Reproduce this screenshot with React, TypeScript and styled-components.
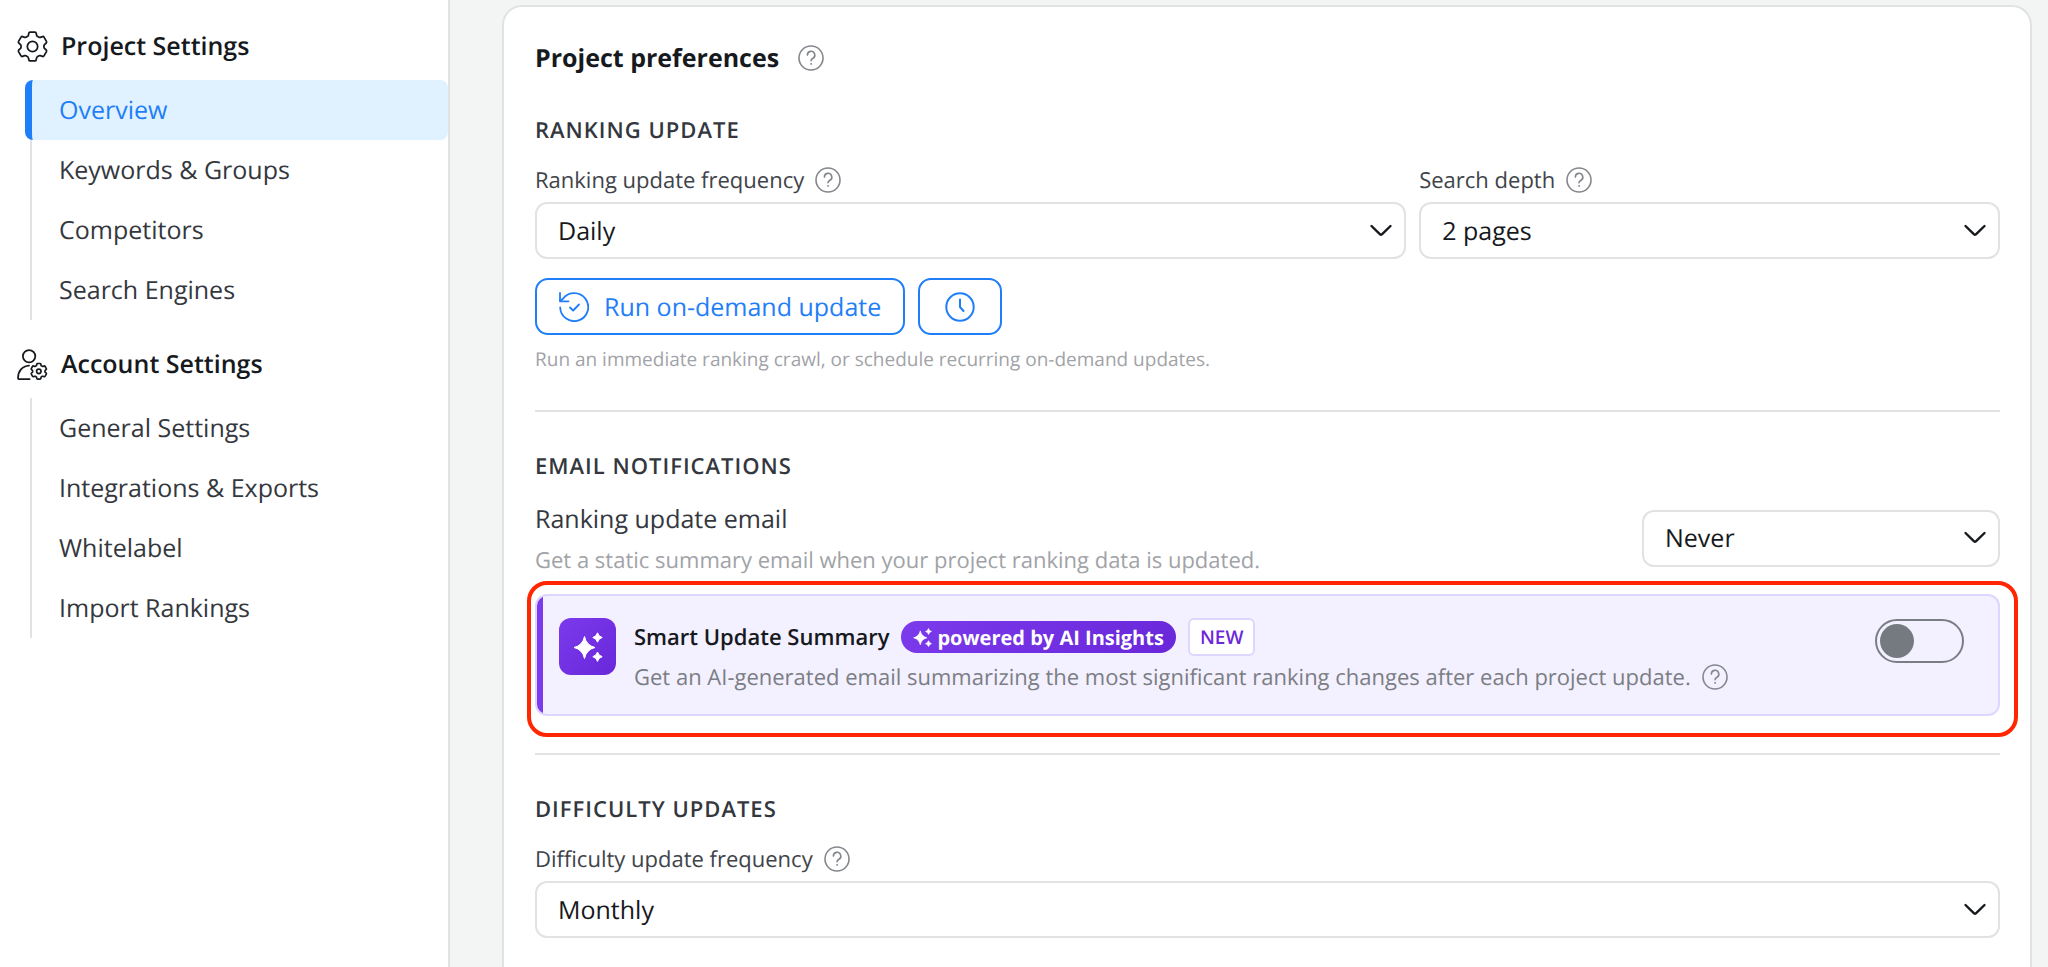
import React from "react";
import styled, { createGlobalStyle, css } from "styled-components";

const GlobalStyle = createGlobalStyle`
  *, *::before, *::after { box-sizing: border-box; }
  body {
    margin: 0;
    background: #f3f5f5;
    color: #16191d;
    font-family: "Open Sans", "Noto Sans", sans-serif;
    font-size: 25px;
    text-rendering: geometricPrecision;
  }
  h1, h2, h3, p, ul { margin: 0; padding: 0; }
  button, select { font: inherit; color: inherit; text-rendering: inherit; }
`;

const Page = styled.div`
  display: flex;
  min-height: 100vh;
`;

const Sidebar = styled.nav`
  flex: 0 0 450px;
  padding-top: 26px;
  background: #fff;
  border-right: 2px solid #e1e2e3;
`;

const NavGroup = styled.section`
  & + & { margin-top: 24px; }
`;

const NavHeading = styled.h2`
  display: flex;
  align-items: center;
  gap: 13px;
  height: 40px;
  padding-left: 17px;
  font-size: 25px;
  font-weight: 600;
  svg { flex: none; }
`;

const NavList = styled.ul`
  margin-top: 14px;
  padding-left: 25px;
  list-style: none;
`;

const navItemActive = css`
  color: #1f7ef8;
  background: #e0f2ff;
  border-left: 7px solid #1f7ef8;
  border-radius: 8px;
  padding-left: 27px;
`;

const navItemIdle = css`
  color: #34383e;
  border-left: 2px solid #e1e2e3;
  margin-left: 5px;
  padding-left: 27px;
`;

const NavItem = styled.a<{ $active?: boolean }>`
  display: block;
  height: 60px;
  line-height: 60px;
  font-size: 25px;
  text-decoration: none;
  ${(p) => (p.$active ? navItemActive : navItemIdle)}
`;

const Main = styled.main`
  flex: 1;
  min-width: 0;
  display: flex;
  padding: 5px 16px 0 52px;
`;

const Card = styled.article`
  flex: 1;
  min-width: 0;
  padding: 33px 30px 30px 31px;
  background: #fff;
  border: 2px solid #e1e2e3;
  border-bottom: 0;
  border-radius: 20px 20px 0 0;
`;

const CardTitle = styled.h1`
  display: flex;
  align-items: center;
  gap: 19px;
  margin-bottom: 39px;
  font-size: 25px;
  line-height: 36px;
  font-weight: 700;
`;

const Section = styled.section`
  & + & {
    margin-top: 37px;
    padding-top: 39px;
    border-top: 2px solid #e1e2e3;
  }
`;

const SectionTitle = styled.h2`
  margin-bottom: 20px;
  color: #34383e;
  font-size: 22px;
  line-height: 30px;
  font-weight: 600;
  letter-spacing: 1px;
  text-transform: uppercase;
`;

const FieldRow = styled.div`
  display: grid;
  grid-template-columns: 3fr 2fr;
  gap: 13px;
`;

const Field = styled.div`
  display: flex;
  flex-direction: column;
  gap: 7px;
`;

const LabelRow = styled.div`
  display: flex;
  align-items: center;
  gap: 11px;
  height: 30px;
`;

const Label = styled.label`
  color: #40444a;
  font-size: 22px;
  line-height: 30px;
`;

const HelpButton = styled.button`
  display: flex;
  padding: 0;
  border: 0;
  background: none;
  color: #84878d;
  cursor: pointer;
`;

const SelectWrap = styled.div<{ $compact?: boolean }>`
  display: grid;
  align-items: center;
  flex: none;
  width: ${(p) => (p.$compact ? "358px" : "100%")};
  > * { grid-area: 1 / 1; }
  svg {
    justify-self: end;
    margin-right: 13px;
    pointer-events: none;
  }
`;

const SelectBox = styled.select`
  appearance: none;
  width: 100%;
  height: 57px;
  padding: 0 48px 0 21px;
  border: 2px solid #e1e2e3;
  border-radius: 12px;
  background: #fff;
  font-size: 25px;
`;

const Actions = styled.div`
  display: flex;
  gap: 13px;
  margin-top: 19px;
`;

const OutlineButton = styled.button`
  display: flex;
  align-items: center;
  gap: 15px;
  height: 57px;
  padding: 0 22px;
  border: 2px solid #1f7ef8;
  border-radius: 13px;
  background: #fff;
  color: #1f7ef8;
  font-size: 25px;
  cursor: pointer;
`;

const IconButton = styled(OutlineButton)`
  justify-content: center;
  width: 84px;
`;

const Hint = styled.p`
  margin-top: 11px;
  color: #a1a3a7;
  font-size: 19px;
  line-height: 27px;
`;

const SettingRow = styled.div`
  display: flex;
  align-items: center;
  justify-content: space-between;
  gap: 24px;
`;

const SettingName = styled.label`
  display: block;
  color: #34383e;
  font-size: 25px;
  line-height: 36px;
`;

const SettingText = styled.p`
  margin-top: 8px;
  color: #a1a3a7;
  font-size: 22px;
  line-height: 30px;
`;

const Highlight = styled.div`
  position: relative;
  margin-top: 19px;
  &::after {
    content: "";
    position: absolute;
    inset: -13px -18px -21px -8px;
    border: 4px solid #ff2600;
    border-radius: 20px;
    pointer-events: none;
  }
`;

const SmartCard = styled.div`
  display: flex;
  align-items: flex-start;
  gap: 18px;
  height: 122px;
  padding: 22px 34px 0 22px;
  border: 2px solid #ddd6fe;
  border-radius: 12px;
  background: linear-gradient(90deg, #7c3aed 6px, #f3f0ff 6px);
`;

const SmartIcon = styled.div`
  display: flex;
  align-items: center;
  justify-content: center;
  flex: none;
  width: 57px;
  height: 57px;
  border-radius: 12px;
  background: linear-gradient(135deg, #7c3aed, #6827d8);
  color: #fff;
`;

const SmartBody = styled.div`
  flex: 1;
  min-width: 0;
`;

const SmartHead = styled.div`
  display: flex;
  align-items: center;
  gap: 12px;
  height: 38px;
`;

const SmartTitle = styled.label`
  font-size: 22px;
  line-height: 38px;
  font-weight: 600;
`;

const PoweredBadge = styled.span`
  display: flex;
  align-items: center;
  gap: 5px;
  height: 32px;
  padding: 0 12px;
  border-radius: 16px;
  background: linear-gradient(135deg, #7c3aed, #6827d8);
  color: #fff;
  font-size: 20px;
  font-weight: 700;
`;

const NewBadge = styled.span`
  display: flex;
  align-items: center;
  height: 38px;
  padding: 0 10px;
  border: 2px solid #ddd6fe;
  border-radius: 6px;
  background: #fff;
  color: #6d28d9;
  font-size: 19px;
  font-weight: 600;
`;

const SmartText = styled.div`
  display: flex;
  align-items: center;
  gap: 11px;
  margin-top: 6px;
  color: #7b7e84;
  font-size: 22px;
  line-height: 30px;
`;

const Toggle = styled.input`
  appearance: none;
  flex: none;
  display: flex;
  align-items: center;
  width: 89px;
  height: 44px;
  margin: 1px 0 0;
  padding: 0 3px;
  border: 2px solid #7a7e84;
  border-radius: 22px;
  cursor: pointer;
  &::before {
    content: "";
    width: 34px;
    height: 34px;
    border-radius: 50%;
    background: #757a81;
  }
  &:checked { justify-content: flex-end; }
`;

const HelpIcon = () => (
  <svg width="26" height="26" viewBox="0 0 26 26" fill="none" stroke="currentColor" strokeWidth="1.6" strokeLinecap="round">
    <circle cx="13" cy="13" r="12" />
    <path d="M9.4 10.1a3.7 3.7 0 1 1 5.6 3.1c-1.2.7-2 1.3-2 2.6" />
    <circle cx="13" cy="18.9" r="0.5" fill="currentColor" strokeWidth="0.8" />
  </svg>
);

const Help = ({ topic }: { topic: string }) => (
  <HelpButton type="button" aria-label={`Help: ${topic}`}>
    <HelpIcon />
  </HelpButton>
);

const ChevronIcon = () => (
  <svg width="24" height="14" viewBox="0 0 24 14" fill="none" stroke="#16191d" strokeWidth="2.4" strokeLinecap="round" strokeLinejoin="round">
    <path d="M2.5 2l8.6 8.4q.9.8 1.8 0L21.5 2" />
  </svg>
);

const GEAR =
  "M12.6 1H17.4Q18.3 1 18.5 1.9L19 4.2Q19.1 4.8 19.7 5.1L21.3 6Q21.9 6.3 22.5 6.1L24.7 5.4Q25.6 5.1 26.1 5.9L28.5 10.1Q28.9 10.9 28.3 11.6L26.6 13.1Q26.1 13.6 26.1 14.2V15.8Q26.1 16.4 26.6 16.9L28.3 18.4Q28.9 19.1 28.5 19.9L26.1 24.1Q25.6 24.9 24.7 24.6L22.5 23.9Q21.9 23.7 21.3 24L19.7 24.9Q19.1 25.2 19 25.8L18.5 28.1Q18.3 29 17.4 29H12.6Q11.7 29 11.5 28.1L11 25.8Q10.9 25.2 10.3 24.9L8.7 24Q8.1 23.7 7.5 23.9L5.3 24.6Q4.4 24.9 3.9 24.1L1.5 19.9Q1.1 19.1 1.7 18.4L3.4 16.9Q3.9 16.4 3.9 15.8V14.2Q3.9 13.6 3.4 13.1L1.7 11.6Q1.1 10.9 1.5 10.1L3.9 5.9Q4.4 5.1 5.3 5.4L7.5 6.1Q8.1 6.3 8.7 6L10.3 5.1Q10.9 4.8 11 4.2L11.5 1.9Q11.7 1 12.6 1Z";

const GearIcon = () => (
  <svg width="31" height="31" viewBox="0 0 30 30" fill="none" stroke="currentColor" strokeWidth="1.7" strokeLinejoin="round">
    <path d={GEAR} />
    <circle cx="15" cy="15" r="5" />
  </svg>
);

const UserGearIcon = () => (
  <svg width="31" height="31" viewBox="0 0 30 30" fill="none" stroke="currentColor" strokeWidth="1.7" strokeLinecap="round" strokeLinejoin="round">
    <circle cx="11.7" cy="7" r="6" />
    <path d="M11.7 16C5 16.4 1 21.5 1 28q0 1.2 1.2 1.2h10" />
    <g transform="translate(13 13.5) scale(.54)" strokeWidth="3">
      <path d={GEAR} />
      <circle cx="15" cy="15" r="4" />
    </g>
  </svg>
);

const RefreshCheckIcon = () => (
  <svg width="30" height="30" viewBox="0 0 30 30" fill="none" stroke="currentColor" strokeWidth="1.8" strokeLinecap="round" strokeLinejoin="round">
    <path d="M1.2 15.5A14 14 0 1 0 4 6.7L1.3 9" />
    <path d="M1 1v8.3h8.5" />
    <path d="M11 15.5l3.2 3 5.8-6" />
  </svg>
);

const ClockIcon = () => (
  <svg width="30" height="30" viewBox="0 0 30 30" fill="none" stroke="currentColor" strokeWidth="2" strokeLinecap="round" strokeLinejoin="round">
    <circle cx="15" cy="15" r="13.7" />
    <path d="M15 7.5v7.5l3.5 4" />
  </svg>
);

const SparklesIcon = ({ size }: { size: number }) => (
  <svg width={size} height={size} viewBox="0 0 30 30" fill="currentColor" stroke="currentColor" strokeLinejoin="round" strokeWidth="1">
    <path d="M11.5 4.5Q13.5 13.5 22 15.5Q13.5 17.5 11.5 26.5Q9.5 17.5 1 15.5Q9.5 13.5 11.5 4.5z" />
    <path d="M24.5 .8Q25.5 4.5 29.2 5.5Q25.5 6.5 24.5 10.2Q23.5 6.5 19.8 5.5Q23.5 4.5 24.5 .8z" />
    <path d="M24.5 20Q25.5 23.5 29.2 24.7Q25.5 25.7 24.5 29.4Q23.5 25.7 19.8 24.7Q23.5 23.5 24.5 20z" />
  </svg>
);

type SelectProps = { id: string; options: string[]; compact?: boolean };

const Select = ({ id, options, compact }: SelectProps) => (
  <SelectWrap $compact={compact}>
    <SelectBox id={id}>
      {options.map((option) => (
        <option key={option}>{option}</option>
      ))}
    </SelectBox>
    <ChevronIcon />
  </SelectWrap>
);

type SelectFieldProps = SelectProps & { label: string };

const SelectField = ({ label, ...select }: SelectFieldProps) => (
  <Field>
    <LabelRow>
      <Label htmlFor={select.id}>{label}</Label>
      <Help topic={label} />
    </LabelRow>
    <Select {...select} />
  </Field>
);

const NAV = [
  {
    title: "Project Settings",
    icon: <GearIcon />,
    items: ["Overview", "Keywords & Groups", "Competitors", "Search Engines"],
  },
  {
    title: "Account Settings",
    icon: <UserGearIcon />,
    items: ["General Settings", "Integrations & Exports", "Whitelabel", "Import Rankings"],
  },
];

export default function App() {
  return (
    <>
      <GlobalStyle />
      <Page>
        <Sidebar aria-label="Settings">
          {NAV.map((group) => (
            <NavGroup key={group.title}>
              <NavHeading>
                {group.icon}
                {group.title}
              </NavHeading>
              <NavList>
                {group.items.map((item) => (
                  <li key={item}>
                    <NavItem href="#" $active={item === "Overview"}>
                      {item}
                    </NavItem>
                  </li>
                ))}
              </NavList>
            </NavGroup>
          ))}
        </Sidebar>
        <Main>
          <Card>
            <CardTitle>
              Project preferences
              <Help topic="Project preferences" />
            </CardTitle>

            <Section>
              <SectionTitle>Ranking update</SectionTitle>
              <FieldRow>
                <SelectField id="frequency" label="Ranking update frequency" options={["Daily"]} />
                <SelectField id="depth" label="Search depth" options={["2 pages"]} />
              </FieldRow>
              <Actions>
                <OutlineButton type="button">
                  <RefreshCheckIcon />
                  Run on-demand update
                </OutlineButton>
                <IconButton type="button" aria-label="Schedule updates">
                  <ClockIcon />
                </IconButton>
              </Actions>
              <Hint>Run an immediate ranking crawl, or schedule recurring on-demand updates.</Hint>
            </Section>

            <Section>
              <SectionTitle>Email notifications</SectionTitle>
              <SettingRow>
                <div>
                  <SettingName htmlFor="email">Ranking update email</SettingName>
                  <SettingText>Get a static summary email when your project ranking data is updated.</SettingText>
                </div>
                <Select id="email" options={["Never"]} compact />
              </SettingRow>
              <Highlight>
                <SmartCard>
                  <SmartIcon>
                    <SparklesIcon size={30} />
                  </SmartIcon>
                  <SmartBody>
                    <SmartHead>
                      <SmartTitle htmlFor="smart">Smart Update Summary</SmartTitle>
                      <PoweredBadge>
                        <SparklesIcon size={19} />
                        powered by AI Insights
                      </PoweredBadge>
                      <NewBadge>NEW</NewBadge>
                    </SmartHead>
                    <SmartText>
                      Get an AI-generated email summarizing the most significant ranking changes after each project update.
                      <Help topic="Smart Update Summary" />
                    </SmartText>
                  </SmartBody>
                  <Toggle type="checkbox" id="smart" role="switch" />
                </SmartCard>
              </Highlight>
            </Section>

            <Section>
              <SectionTitle>Difficulty updates</SectionTitle>
              <SelectField id="difficulty" label="Difficulty update frequency" options={["Monthly"]} />
            </Section>
          </Card>
        </Main>
      </Page>
    </>
  );
}
